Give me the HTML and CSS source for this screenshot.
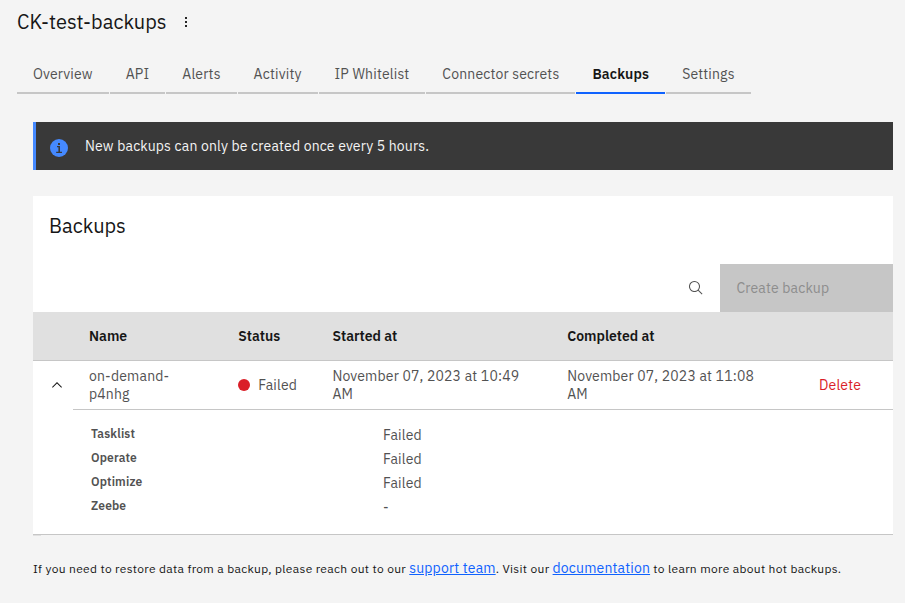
FILE: index.html
```html
<!DOCTYPE html>
<html lang="en">
<head>
<meta charset="utf-8">
<title>CK-test-backups</title>
<link rel="stylesheet" href="styles.css">
</head>
<body>
<header class="page-header">
  <h1>CK-test-backups</h1>
  <svg class="overflow" width="16" height="16" viewBox="0 0 16 16"><path d="M7 3h2v2H7zM7 7h2v2H7zM7 11h2v2H7z"/></svg>
</header>
<nav class="tabs">
  <a class="tab">Overview</a>
  <a class="tab">API</a>
  <a class="tab">Alerts</a>
  <a class="tab">Activity</a>
  <a class="tab">IP Whitelist</a>
  <a class="tab">Connector secrets</a>
  <a class="tab active">Backups</a>
  <a class="tab">Settings</a>
</nav>
<main>
  <div class="notice">
    <svg width="18" height="18" viewBox="0 0 18 18"><circle cx="9" cy="9" r="9" fill="#4589ff"/><path fill="#393939" d="M8 4h2v2H8zM7 7h3v5.7h2V14H6.2v-1.3h2.2V8.3H7z"/></svg>
    <span>New backups can only be created once every 5 hours.</span>
  </div>
  <section class="card">
    <h2>Backups</h2>
    <div class="toolbar">
      <svg class="search" width="16" height="16" viewBox="0 0 32 32"><path d="M29 27.586l-7.552-7.552a11.018 11.018 0 1 0-1.414 1.414L27.586 29zM4 13a9 9 0 1 1 9 9 9.01 9.01 0 0 1-9-9z"/></svg>
      <button class="create" disabled>Create backup</button>
    </div>
    <div class="row head">
      <span></span><span>Name</span><span>Status</span><span>Started at</span><span>Completed at</span><span></span>
    </div>
    <div class="row item">
      <svg class="chevron" width="16" height="16" viewBox="0 0 16 16"><path d="M8 5l5 5-.7.7L8 6.4l-4.3 4.3L3 10z"/></svg>
      <span>on-demand-<br>p4nhg</span>
      <span class="status"><i class="dot"></i><span>Failed</span></span>
      <span>November 07, 2023 at 10:49<br>AM</span>
      <span>November 07, 2023 at 11:08<br>AM</span>
      <a class="delete">Delete</a>
    </div>
    <dl class="details">
      <dt>Tasklist</dt><dd>Failed</dd>
      <dt>Operate</dt><dd>Failed</dd>
      <dt>Optimize</dt><dd>Failed</dd>
      <dt>Zeebe</dt><dd>-</dd>
    </dl>
  </section>
  <div class="card-end"></div>
  <p class="help">If you need to restore data from a backup, please reach out to our <a>support team</a>. Visit our <a>documentation</a> to learn more about hot backups.</p>
</main>
</body>
</html>
```
FILE: styles.css
```css
* { box-sizing: border-box; }
body { margin: 0; background: #f4f4f4; color: #161616; font: 14px/18px "IBM Plex Sans", Roboto, sans-serif; letter-spacing: .16px; }
h1, h2 { margin: 0; font-size: 20px; font-weight: 400; line-height: 28px; letter-spacing: 0; }
.page-header { display: flex; align-items: center; gap: 12px; height: 44px; padding-left: 17px; }
.page-header h1 { width: 149px; white-space: nowrap; }
.overflow { fill: #262626; }
.tabs { display: flex; gap: 1px; height: 40px; margin: 10px 0 0 17px; }
.tab { padding: 11px 16px 0; border-bottom: 2px solid #c6c6c6; color: #525252; white-space: nowrap; }
.tab.active { border-color: #0f62fe; color: #161616; font-weight: 600; }
main { padding: 28px 12px 0 33px; }
.notice { display: flex; align-items: flex-start; gap: 17px; height: 48px; padding: 15px 0 0 14px; background: #393939; border-left: 3px solid #4589ff; color: #f4f4f4; }
.notice svg { margin-top: 2px; }
.card { height: 339px; margin-top: 26px; background: #fff; border-bottom: 1px solid #c6c6c6; }
.card-end { width: 8px; height: 1px; background: #e0e0e0; }
.card h2 { height: 68px; padding: 16px 0 0 16px; }
.toolbar { display: flex; justify-content: flex-end; align-items: center; height: 48px; }
.search { margin-right: 15.6px; fill: #525252; }
.create { width: 173px; height: 48px; padding: 0 16px 0 16.4px; border: 0; background: #c6c6c6; color: #8d8d8d; font: inherit; letter-spacing: .16px; text-align: left; white-space: nowrap; }
.row { display: grid; grid-template-columns: 56px 149.3px 94.1px 234.8px 251.8px 1fr; align-items: center; height: 49px; white-space: nowrap; }
.head { background: #e0e0e0; border-bottom: 1px solid #c6c6c6; font-weight: 600; letter-spacing: 0; }
.item { padding-bottom: 1px; color: #525252; background: linear-gradient(#c6c6c6, #c6c6c6) 40px 100% / 100% 1px no-repeat; }
.chevron { margin-left: 16px; fill: #161616; }
.status { display: flex; align-items: center; gap: 8px; }
.dot { width: 12px; height: 12px; border-radius: 50%; background: #da1e28; }
.delete { color: #da1e28; }
.details { display: grid; grid-template-columns: 292px 1fr; grid-auto-rows: 24px; margin: 12px 0 0 58px; color: #525252; }
dt { font-size: 12px; line-height: 24px; font-weight: 600; letter-spacing: .16px; }
dd { margin: 0; line-height: 26px; }
.help { margin: 22px 0 0; font-size: 12px; line-height: 20px; letter-spacing: .32px; white-space: nowrap; }
.help a { color: #0f62fe; font-size: 14px; letter-spacing: .16px; text-decoration: underline; }
```
